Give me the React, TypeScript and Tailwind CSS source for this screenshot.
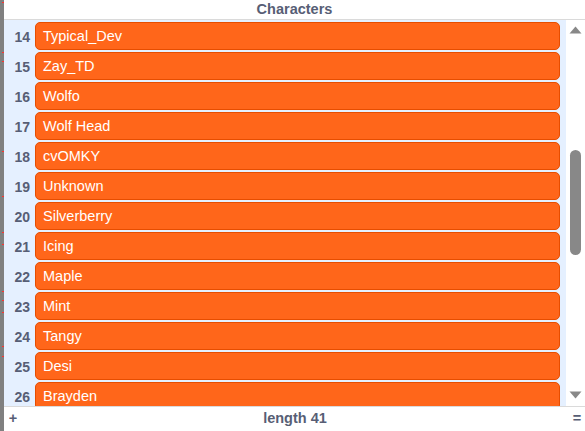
const items = [
  'Typical_Dev',
  'Zay_TD',
  'Wolfo',
  'Wolf Head',
  'cvOMKY',
  'Unknown',
  'Silverberry',
  'Icing',
  'Maple',
  'Mint',
  'Tangy',
  'Desi',
  'Brayden',
];

const redDots = [2, 52, 61, 151, 196, 232, 244, 291, 300, 312, 346, 356];

export default function App() {
  return (
    <div className="flex w-[585px] h-[431px] overflow-hidden bg-white font-['Liberation_Sans',Arial,sans-serif] text-[#575e75]">
      <div className="relative w-[4px] h-full bg-[#808080]">
        {redDots.map((y) => (
          <span key={y} className="absolute right-0 w-[2px] h-[1px] bg-[#ff3030]" style={{ top: y }} />
        ))}
      </div>
      <div className="flex flex-1 flex-col">
        <div className="h-[20px] border-b border-[#dadada] text-center text-[14.5px] leading-[19px] font-bold">
          Characters
        </div>
        <div className="flex flex-1 min-h-0 bg-[#e5f0ff]">
          <div className="flex-1 overflow-hidden pt-[2px]">
            {items.map((name, i) => (
              <div key={name} className="flex items-center h-[30px]">
                <div className="w-[31px] pr-[5px] text-right text-[14px] font-bold">{i + 14}</div>
                <div className="flex-1 h-[28px] mb-[2px] mr-[6px] rounded-[5px] border border-[#e64d00] bg-[#ff661a] pl-[7px] text-[14.5px] leading-[26px] text-white">
                  {name}
                </div>
              </div>
            ))}
          </div>
          <div className="relative w-[19px] bg-white">
            <svg className="absolute left-[3px] top-[6px]" width="13" height="8" viewBox="0 0 13 8">
              <path d="M6.5 0.5 L12.5 7.5 L0.5 7.5 Z" fill="#888" />
            </svg>
            <div className="absolute left-[4px] top-[130px] w-[11px] h-[105px] rounded-full bg-[#888]" />
            <svg className="absolute left-[3px] bottom-[7px]" width="13" height="8" viewBox="0 0 13 8">
              <path d="M0.5 0.5 L12.5 0.5 L6.5 7.5 Z" fill="#888" />
            </svg>
          </div>
        </div>
        <div className="flex items-center justify-between h-[25px] border-t border-[#dadada] pl-[4px] pr-[3px] text-[14.5px] font-bold">
          <span className="w-[10px] text-center">+</span>
          <span>length 41</span>
          <span className="w-[10px] text-center">=</span>
        </div>
      </div>
    </div>
  );
}
